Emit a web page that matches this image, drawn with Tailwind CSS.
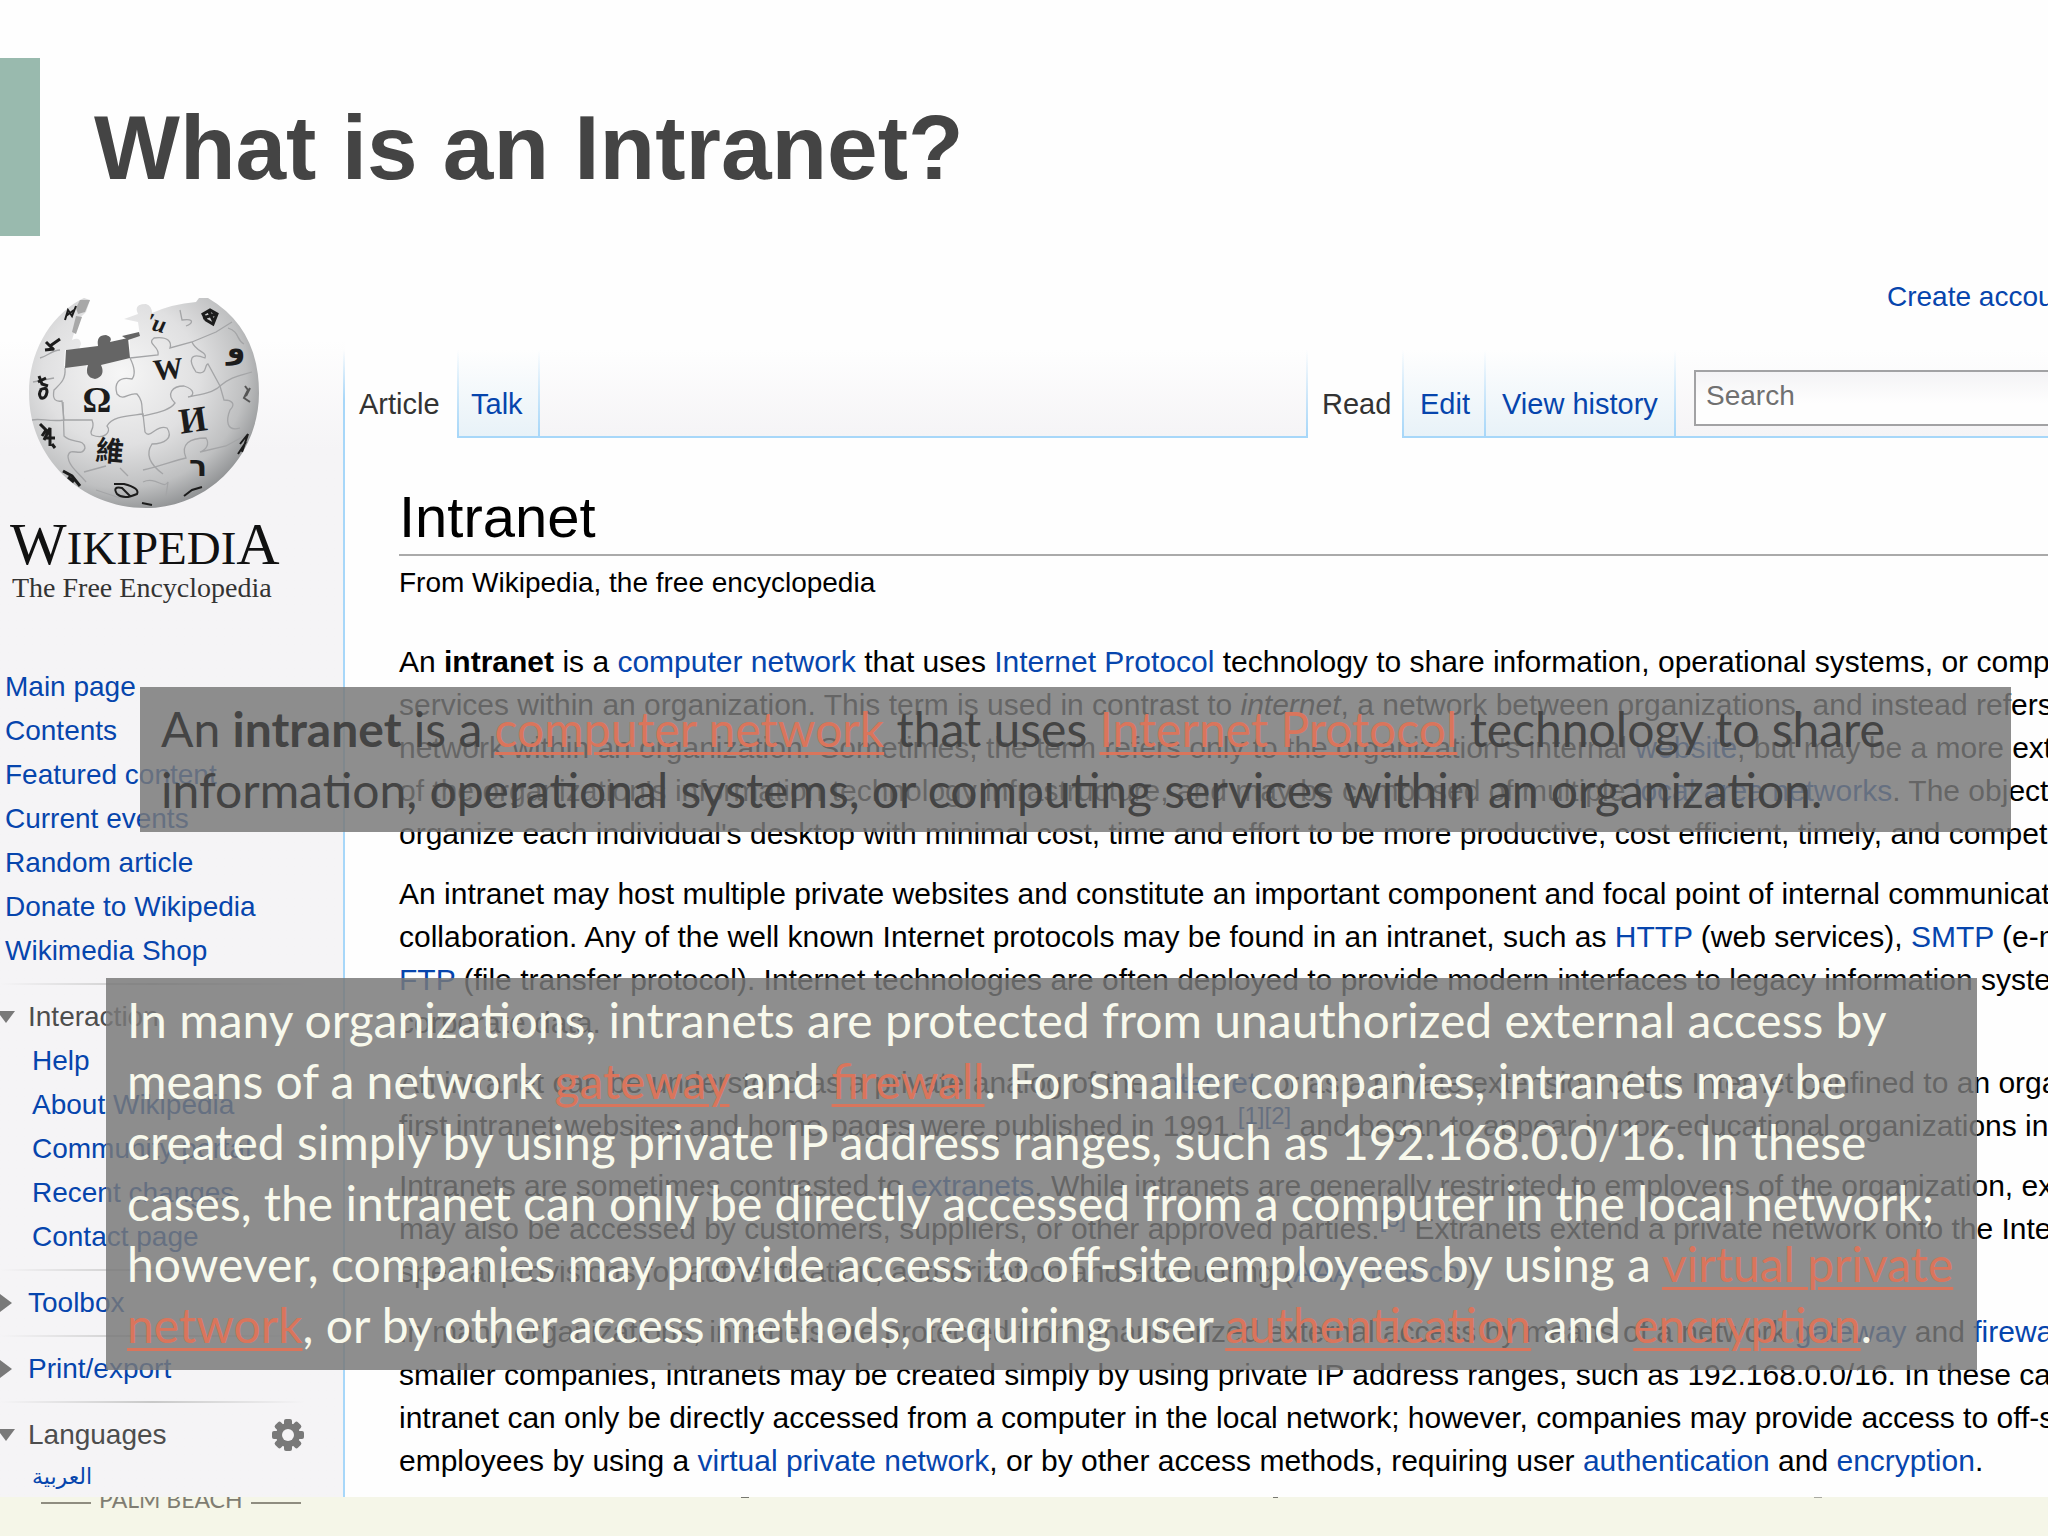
<!DOCTYPE html>
<html lang="en">
<head>
    <meta charset="UTF-8">
    <meta name="viewport" content="width=device-width, initial-scale=1.0">
    <title>What is an Intranet?</title>
    <script src="https://cdn.jsdelivr.net/npm/@tailwindcss/browser@4"></script>
</head>
<body class="min-h-screen flex flex-col overflow-x-hidden bg-[#fefefe] font-['Liberation_Sans',Arial,sans-serif]">
    <!-- Slide title -->
    <header class="flex pt-[58px] pb-6">
        <div class="w-10 h-[178px] bg-[#99baae]"></div>
        <h1 class="pl-[54px] pt-[38px] text-[91px] leading-[104px] font-bold text-[#444444]">What is an Intranet?</h1>
    </header>

    <main class="relative grid grid-cols-[345px_minmax(0,1fr)] overflow-hidden text-[28px] leading-[43px] text-black">
        <!-- Wiki sidebar -->
        <aside class="relative bg-linear-to-b from-[#fefefe] from-[80px] to-[#f5f4f6] to-[190px]">
            <div class="absolute top-[90px] bottom-0 right-0 w-[2px] bg-linear-to-b from-transparent to-[#a7d7f9] to-[50px]"></div>
            <svg class="block w-[345px] h-[256px]" viewBox="0 0 345 256" role="img" aria-label="Puzzle globe">
                <defs>
                    <radialGradient id="globe" cx="0.4" cy="0.36" r="0.68">
                        <stop offset="0" stop-color="#f6f6f6"/>
                        <stop offset="0.5" stop-color="#e0e0e1"/>
                        <stop offset="0.8" stop-color="#bfc0c1"/>
                        <stop offset="1" stop-color="#8c8e90"/>
                    </radialGradient>
                </defs>
                <path fill="url(#globe)" d="M84 38L90 40L86 52L78 60L72 80Q80 76 81 84L79 89L65 90L64 106L86 104Q86 118 95 118Q104 117 101 105L130 98L130 78L140 76L138 62L124 59L138 54Q133 44 146 44Q152 46 152 53Q172 44 196 42L199 38L208 38Q259 68 259 133C259 196 208 248 146 248C80 248 29 197 29 133C29 94 48 58 80 40Z"/>
                <path fill="#656565" d="M66 90L98 86Q96 75 106 75Q113 77 110 82L128 78L130 98L101 105Q106 116 95 119Q84 117 88 105L65 108Z"/>
                <path fill="#a8a8a8" d="M80 40L90 40L85 52L78 54L76 48ZM76 56L82 57L76 74L72 72Z"/>
                <path fill="#656565" d="M122 76L139 72L140 76L128 80Z"/>
                <g fill="none" stroke="#a4a5a7" stroke-width="1.3">
                    <path d="M65 108C66 120 60 124 54 130C52 140 56 142 62 141L64 160C50 162 40 158 32 160"/>
                    <path d="M130 98C134 106 136 114 132 119C118 116 114 124 117 134C124 142 128 132 137 134C144 142 141 148 143 156C160 152 170 150 175 143C166 134 172 126 184 126C196 130 194 136 188 137C204 134 214 132 220 126C232 116 240 116 252 112"/>
                    <path d="M64 160L92 160C96 170 88 170 92 175C104 180 112 172 107 166C112 156 128 156 143 154L145 172C150 180 156 164 167 168C174 178 164 184 152 184C144 196 152 206 163 214"/>
                    <path d="M63 142L64 176C72 184 84 178 85 188C82 198 70 186 68 196C68 206 80 214 86 222"/>
                    <path d="M130 98L158 95C160 86 146 84 154 78C168 76 172 82 170 88L192 82L216 72L232 62"/>
                    <path d="M192 82C196 92 208 92 205 98C190 92 188 100 196 112C208 116 204 104 208 104L220 126L224 140C232 140 236 144 230 150C226 160 226 172 240 168"/>
                    <path d="M143 210C160 206 176 200 186 198C180 184 190 178 206 178C210 184 206 190 200 192L226 186L248 174"/>
                    <path d="M84 212L106 206M120 208L128 216M143 222C156 216 164 230 168 222L166 236M96 230L120 238M180 50L182 60C196 58 192 64 186 66"/>
                    <path d="M33 122L54 118M40 98C48 96 52 90 60 90M228 68C240 72 236 80 244 84"/>
                </g>
                <g fill="#1c1c1c" font-family="Liberation Serif, serif" text-anchor="middle">
                    <text x="97" y="152" font-size="36" font-weight="bold">Ω</text>
                    <text x="168" y="119" font-size="30" font-weight="bold" transform="rotate(-6 168 108)">W</text>
                    <text x="193" y="172" font-size="36" font-weight="bold" transform="rotate(-8 193 160)">И</text>
                    <text x="110" y="201" font-size="28" font-weight="bold" font-family="Noto Sans CJK TC, sans-serif" transform="rotate(5 110 190)">維</text>
                    <text x="198" y="216" font-size="30" font-family="DejaVu Sans, sans-serif" font-weight="bold">ר</text>
                    <text x="156" y="71" font-size="24" font-weight="bold" font-style="italic" transform="rotate(14 156 64)">'и</text>
                    <text x="236" y="98" font-size="30" font-weight="bold" font-family="DejaVu Sans, sans-serif">و</text>
                </g>
                <g fill="none" stroke="#1c1c1c" stroke-width="3">
                    <path d="M203 54L210 50L217 54L213 64L206 60ZM208 50L214 62M203 58L216 54"/>
                    <path d="M39 116L42 124L48 126M38 122L46 118M40 130Q47 126 47 132Q46 139 41 138Q38 134 41 130"/>
                    <path d="M46 82L54 90M50 86L60 79M45 90L54 89"/>
                    <path stroke-width="2" d="M65 60L68 50L72 56L76 46M66 56L74 50"/>
                    <path d="M40 164L46 170L42 176M44 180L50 168L50 186M46 178L55 178M52 184L55 188"/>
                    <path d="M63 211L72 216L80 226M68 217L74 222"/>
                    <path stroke-width="2" d="M114 224L124 224Q140 228 137 234Q124 240 117 234Q112 226 122 228L130 236"/>
                    <path stroke-width="2" stroke="#555555" d="M245 126L248 130L244 138L250 142M250 128L246 136"/>
                    <path stroke-width="2" d="M240 184L248 174L242 192M238 194L246 182M184 236L192 230L202 227M142 243L152 245"/>
                </g>
            </svg>
            <div class="font-['Liberation_Serif',serif] pl-[10px] whitespace-nowrap">
                <div class="text-[60px] leading-[56px] text-[#111111]">W<span class="text-[47px] leading-none">IKIPEDI</span>A</div>
                <div class="text-[28px] leading-8 pl-[2px] text-[#333333]">The Free Encyclopedia</div>
            </div>

            <nav class="mt-[61px] leading-11 text-[#0645ad]">
                <ul class="pl-[5px]">
                    <li><a href="#">Main page</a></li>
                    <li><a href="#">Contents</a></li>
                    <li><a href="#">Featured content</a></li>
                    <li><a href="#">Current events</a></li>
                    <li><a href="#">Random article</a></li>
                    <li><a href="#">Donate to Wikipedia</a></li>
                    <li><a href="#">Wikimedia Shop</a></li>
                </ul>

                <div class="my-[10px] h-[2px] w-[305px] bg-linear-to-r from-transparent via-[#c8c8c8] to-transparent"></div>
                <h3 class="flex items-center text-[#4d4d4d]">
                    <svg class="w-[28px] h-3" viewBox="0 0 28 12"><path fill="#797979" d="M-3 0H15L6 12Z"/></svg>Interaction
                </h3>
                <ul class="pl-8">
                    <li><a href="#">Help</a></li>
                    <li><a href="#">About Wikipedia</a></li>
                    <li><a href="#">Community portal</a></li>
                    <li><a href="#">Recent changes</a></li>
                    <li><a href="#">Contact page</a></li>
                </ul>

                <div class="my-[10px] h-[2px] w-[305px] bg-linear-to-r from-transparent via-[#c8c8c8] to-transparent"></div>
                <h3 class="flex items-center">
                    <svg class="w-[28px] h-[18px]" viewBox="0 0 28 18"><path fill="#797979" d="M0 0L12 9L0 18Z"/></svg><a href="#">Toolbox</a>
                </h3>

                <div class="my-[10px] h-[2px] w-[305px] bg-linear-to-r from-transparent via-[#c8c8c8] to-transparent"></div>
                <h3 class="flex items-center">
                    <svg class="w-[28px] h-[18px]" viewBox="0 0 28 18"><path fill="#797979" d="M0 0L12 9L0 18Z"/></svg><a href="#">Print/export</a>
                </h3>

                <div class="my-[10px] h-[2px] w-[305px] bg-linear-to-r from-transparent via-[#c8c8c8] to-transparent"></div>
                <h3 class="flex items-center pr-[41px] text-[#4d4d4d]">
                    <svg class="w-[28px] h-3" viewBox="0 0 28 12"><path fill="#797979" d="M-3 0H15L6 12Z"/></svg>Languages
                    <button class="ml-auto" aria-label="Language settings">
                        <svg class="block w-8 h-8" viewBox="0 0 32 32">
                            <g fill="#797979">
                                <rect x="12" y="0" width="8" height="32" rx="2"/>
                                <rect x="12" y="0" width="8" height="32" rx="2" transform="rotate(45 16 16)"/>
                                <rect x="12" y="0" width="8" height="32" rx="2" transform="rotate(90 16 16)"/>
                                <rect x="12" y="0" width="8" height="32" rx="2" transform="rotate(135 16 16)"/>
                                <circle cx="16" cy="16" r="12"/>
                            </g>
                            <circle cx="16" cy="16" r="6" fill="#f5f4f6"/>
                        </svg>
                    </button>
                </h3>
                <a href="#" lang="ar" class="block pl-8 text-[22px] leading-10 font-['DejaVu_Sans',sans-serif]">العربية</a>
            </nav>
        </aside>

        <!-- Wiki page -->
        <div class="min-w-0 whitespace-nowrap">
            <div class="flex justify-end pt-[15px]">
                <a href="#" class="w-[161px] text-[#0645ad]">Create account</a>
            </div>
            <div class="mt-8 flex h-[88px] text-[29px]">
                <div class="w-[112px] pt-[33px] pl-[14px] text-[#333333]">Article</div>
                <div class="flex border-b-2 border-[#a7d7f9] bg-linear-to-b from-[#fefefe] to-[#e8f2f8]">
                    <span class="w-[2px] bg-linear-to-b from-transparent to-[#a7d7f9]"></span>
                    <a href="#" class="w-[79px] pt-[33px] pl-3 text-[#0645ad]">Talk</a>
                    <span class="w-[2px] bg-linear-to-b from-transparent to-[#a7d7f9]"></span>
                </div>
                <div class="flex flex-1 justify-end border-b-2 border-[#a7d7f9] bg-linear-to-b from-[#fefefe] to-[#f5f4f6]">
                    <span class="w-[2px] bg-linear-to-b from-transparent to-[#a7d7f9]"></span>
                </div>
                <div class="w-[94px] pt-[33px] pl-[14px] text-[#333333]">Read</div>
                <div class="flex border-b-2 border-[#a7d7f9] text-[#0645ad] bg-linear-to-b from-[#fefefe] to-[#e8f2f8]">
                    <span class="w-[2px] bg-linear-to-b from-transparent to-[#a7d7f9]"></span>
                    <a href="#" class="w-20 pt-[33px] pl-4">Edit</a>
                    <span class="w-[2px] bg-linear-to-b from-transparent to-[#a7d7f9]"></span>
                    <a href="#" class="w-[188px] pt-[33px] pl-4">View history</a>
                    <span class="w-[2px] bg-linear-to-b from-transparent to-[#a7d7f9]"></span>
                </div>
                <div class="pl-[18px] pt-5 border-b-2 border-[#a7d7f9] bg-linear-to-b from-[#fefefe] to-[#f5f4f6]">
                    <input type="text" aria-label="Search" placeholder="Search" class="block w-[354px] h-14 pl-[10px] pb-1 text-[28px] border-2 border-r-0 border-[#a2a2a4] bg-linear-to-b from-[#f4f3f5] to-[#fefefe] to-60% placeholder:text-[#707070]">
                </div>
            </div>

            <article class="pl-[54px] pt-[47px] pb-[14px]">
                <h2 class="pb-[5px] text-[58px] leading-16 border-b-2 border-[#aaaaaa]">Intranet</h2>
                <p class="mt-[5px] mb-9">From Wikipedia, the free encyclopedia</p>

                <div class="space-y-[17px] text-[30px]">
                    <p>An <b>intranet</b> is a <a href="#" class="text-[#0645ad]">computer network</a> that uses <a href="#" class="text-[#0645ad]">Internet Protocol</a> technology to share information, operational systems, or computing<br>
                    services within an organization. This term is used in contrast to <i>internet</i>, a network between organizations, and instead refers to a<br>
                    network within an organization. Sometimes, the term refers only to the organization's internal <a href="#" class="text-[#0645ad]">website</a>, but may be a more extensive<br>
                    of the organization's information technology infrastructure, and may be composed of multiple <a href="#" class="text-[#0645ad]">local area networks</a>. The objective is to<br>
                    organize each individual's desktop with minimal cost, time and effort to be more productive, cost efficient, timely, and competitive.</p>
                    <p>An intranet may host multiple private websites and constitute an important component and focal point of internal communication and<br>
                    collaboration. Any of the well known Internet protocols may be found in an intranet, such as <a href="#" class="text-[#0645ad]">HTTP</a> (web services), <a href="#" class="text-[#0645ad]">SMTP</a> (e-mail), and<br>
                    <a href="#" class="text-[#0645ad]">FTP</a> (file transfer protocol). Internet technologies are often deployed to provide modern interfaces to legacy information systems<br>
                    corporate data.</p>
                    <p>An intranet can be understood as a private analog of the <a href="#" class="text-[#0645ad]">Internet</a>, or as a private extension of the Internet confined to an organization.<br>
                    first intranet websites and home pages were published in 1991.<sup class="text-[24px] leading-none text-[#0645ad]"><a href="#">[1]</a><a href="#">[2]</a></sup> and began to appear in non-educational organizations in 1994.</p>
                    <p>Intranets are sometimes contrasted to <a href="#" class="text-[#0645ad]">extranets</a>. While intranets are generally restricted to employees of the organization, extranets<br>
                    may also be accessed by customers, suppliers, or other approved parties.<sup class="text-[24px] leading-none text-[#0645ad]"><a href="#">[3]</a></sup> Extranets extend a private network onto the Internet<br>
                    special provisions for authentication, authorization and accounting (<a href="#" class="text-[#0645ad]">AAA protocol</a>).</p>
                    <p>In many organizations, intranets are protected from unauthorized external access by means of a network <a href="#" class="text-[#0645ad]">gateway</a> and <a href="#" class="text-[#0645ad]">firewall</a>. For<br>
                    smaller companies, intranets may be created simply by using private IP address ranges, such as 192.168.0.0/16. In these cases, the<br>
                    intranet can only be directly accessed from a computer in the local network; however, companies may provide access to off-site<br>
                    employees by using a <a href="#" class="text-[#0645ad]">virtual private network</a>, or by other access methods, requiring user <a href="#" class="text-[#0645ad]">authentication</a> and <a href="#" class="text-[#0645ad]">encryption</a>.</p>
                </div>
            </article>
        </div>

        <!-- Callouts over the wiki page -->
        <div class="absolute top-[427px] left-[140px] right-[37px] pt-[11px] pb-3 pl-[21px] whitespace-nowrap bg-[#787878]/84 font-[Lato,sans-serif] text-[48px] leading-[61px] text-[#444444]">
            An <b>intranet</b> is a <a href="#" class="text-[#da755c] underline decoration-3 underline-offset-5">computer network</a> that uses <a href="#" class="text-[#da755c] underline decoration-3 underline-offset-5">Internet Protocol</a> technology to share<br>
            information, operational systems, or computing services within an organization.
        </div>
        <div class="absolute top-[718px] left-[106px] right-[71px] pt-[11px] pb-[15px] pl-[21px] whitespace-nowrap bg-[#787878]/84 font-[Lato,sans-serif] text-[48px] leading-[61px] text-[#f8f9ec]">
            In many organizations, intranets are protected from unauthorized external access by<br>
            means of a network <a href="#" class="text-[#da755c] underline decoration-3 underline-offset-5">gateway</a> and <a href="#" class="text-[#da755c] underline decoration-3 underline-offset-5">firewall</a>. For smaller companies, intranets may be<br>
            created simply by using private IP address ranges, such as 192.168.0.0/16. In these<br>
            cases, the intranet can only be directly accessed from a computer in the local network;<br>
            however, companies may provide access to off-site employees by using a <a href="#" class="text-[#da755c] underline decoration-3 underline-offset-5">virtual private<br>
            network</a>, or by other access methods, requiring user <a href="#" class="text-[#da755c] underline decoration-3 underline-offset-5">authentication</a> and <a href="#" class="text-[#da755c] underline decoration-3 underline-offset-5">encryption</a>.
        </div>
    </main>

    <!-- Slide footer, its logo half hidden behind the wiki page -->
    <footer class="relative flex-1 bg-[#f5f6e8]">
        <div class="flex h-3 items-center gap-2 pl-[41px] overflow-hidden text-[#7f7d72]">
            <span class="w-[50px] h-[2px] bg-[#8f8d80]"></span>
            <span class="flex h-3 items-end text-[23px] leading-5 font-[Lato,sans-serif]">PALM BEACH</span>
            <span class="w-[50px] h-[2px] bg-[#8f8d80]"></span>
        </div>
        <!-- Tips of the letters that stick out under the page -->
        <span class="absolute top-0 left-[741px] w-2 h-px bg-[#77776f]"></span>
        <span class="absolute top-0 left-[1273px] w-[5px] h-px bg-[#77776f]"></span>
        <span class="absolute top-0 left-[1814px] w-2 h-px bg-[#a9a9a0]"></span>
    </footer>
</body>
</html>
